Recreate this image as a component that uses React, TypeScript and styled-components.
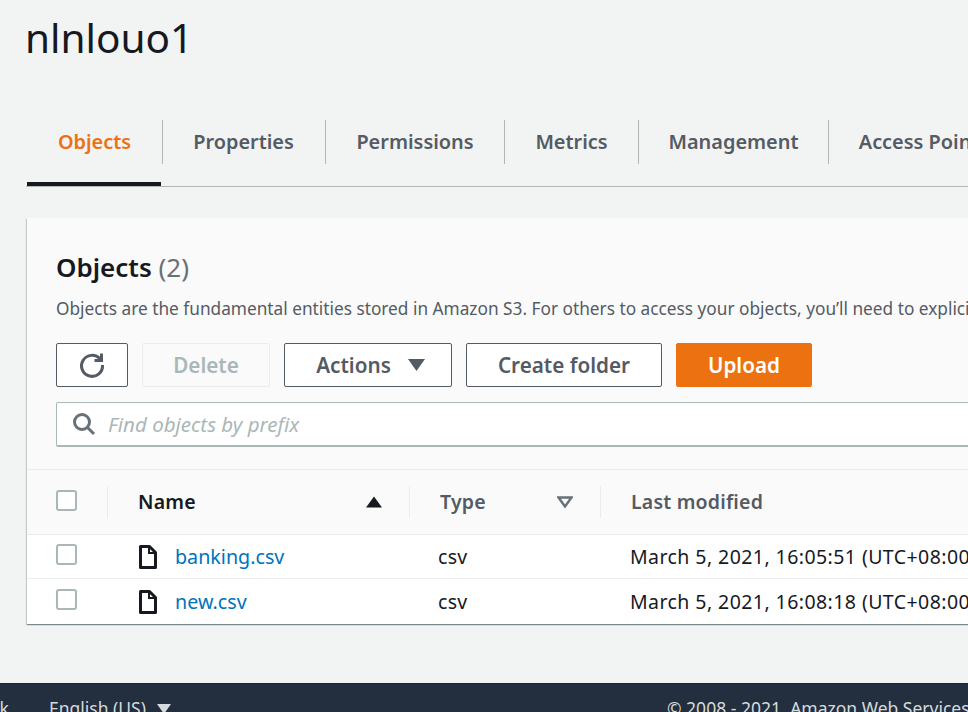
import React from 'react';
import styled, { createGlobalStyle } from 'styled-components';

const GlobalStyle = createGlobalStyle`
  html, body {
    margin: 0;
    height: 712px;
    overflow: hidden;
    background: #f2f3f3;
    font-family: 'Noto Sans', 'Open Sans', sans-serif;
  }
  * { box-sizing: border-box; }
`

const Page = styled.div`
  width: 968px;
  height: 712px;
  overflow: hidden;
  display: flex;
  flex-direction: column;
`
const Main = styled.main`
  width: 1500px;
  height: 683px;
  padding-left: 26px;
`
const Title = styled.h1`
  margin: 0 0 0 -1px;
  height: 120px;
  padding-top: 11px;
  font-size: 40.5px;
  line-height: 54px;
  font-weight: 400;
  color: #16191f;
`
const TabBar = styled.div`
  display: flex;
  height: 67px;
  padding-left: 1px;
  border-bottom: 1px solid #b0b5b7;
`
const Tab = styled.div<{ $active?: boolean; $width: number }>`
  width: ${p => p.$width}px;
  height: 66px;
  margin-right: ${p => (p.$active ? '1px' : '0')};
  font-size: 19.9px;
  line-height: 44px;
  font-weight: 600;
  text-align: center;
  white-space: nowrap;
  color: ${p => (p.$active ? '#ec7211' : '#545b64')};
  border-bottom: 4px solid ${p => (p.$active ? '#16191f' : 'transparent')};
  span {
    display: block;
    height: 44px;
    margin-right: ${p => (p.$active ? '-2px' : '0')};
    border-right: 1px solid #b0b5b7;
  }
  &:last-child span { border-right: none; }
`
const Card = styled.section`
  margin: 31px 0 0 1px;
  height: 406px;
  background: #fff;
  box-shadow: 0 1px 1px 0 rgba(0, 28, 36, 0.3), 1px 1px 1px 0 rgba(0, 28, 36, 0.15), -1px 1px 1px 0 rgba(0, 28, 36, 0.15);
`
const CardHead = styled.div`
  background: #fafafa;
  height: 252px;
  padding: 30px 0 0 29px;
  border-bottom: 1px solid #eaeded;
`
const Heading = styled.h2`
  margin: 0;
  font-size: 26px;
  line-height: 38px;
  font-weight: 600;
  color: #16191f;
  em {
    font-style: normal;
    font-weight: 400;
    color: #687078;
  }
`
const Desc = styled.p`
  margin: 11px 0 0;
  font-size: 17.25px;
  line-height: 24px;
  color: #545b64;
  white-space: nowrap;
`
const Toolbar = styled.div`
  display: flex;
  gap: 14px;
  margin-top: 22px;
`
const Button = styled.div<{ $width: number; $kind?: 'primary' | 'disabled' }>`
  width: ${p => p.$width}px;
  height: 44px;
  display: flex;
  align-items: center;
  justify-content: center;
  border-radius: 2px;
  font-size: 20.7px;
  font-weight: 600;
  color: ${p => (p.$kind === 'primary' ? '#fff' : p.$kind === 'disabled' ? '#aab7b8' : '#545b64')};
  background: ${p => (p.$kind === 'primary' ? '#ec7211' : p.$kind === 'disabled' ? '#fafafa' : '#fff')};
  border: 1px solid ${p => (p.$kind === 'primary' ? '#ec7211' : p.$kind === 'disabled' ? '#eaeded' : '#545b64')};
`
const ActionsCaret = styled.svg`
  margin: 0 -5px 0 17px;
`
const SearchBox = styled.div`
  margin-top: 15px;
  height: 45px;
  display: flex;
  align-items: center;
  gap: 12px;
  padding-left: 15px;
  background: #fff;
  border: 1px solid #aab7b8;
  border-bottom-width: 2px;
  border-radius: 2px;
  font-size: 20.5px;
  font-style: italic;
  color: #aab7b8;
`
const Row = styled.div<{ $head?: boolean; $height: number }>`
  display: grid;
  grid-template-columns: 80px 302px 191px 1fr;
  align-items: center;
  height: ${p => p.$height}px;
  background: ${p => (p.$head ? '#fafafa' : '#fff')};
  border-bottom: 1px solid #eaeded;
  &:last-child { border-bottom: none; }
`
const CheckCell = styled.div<{ $lift: number }>`
  display: flex;
  padding-left: 29px;
  margin-top: ${p => p.$lift}px;
`
const Check = styled.div`
  width: 21px;
  height: 21px;
  background: #fff;
  border: 2px solid #aab7b8;
  border-radius: 3px;
`
const HeadCell = styled.div<{ $dark?: boolean }>`
  height: 32px;
  display: flex;
  align-items: center;
  justify-content: space-between;
  padding: 0 27px 2px 30px;
  border-left: 1px solid #eaeded;
  font-size: 19.5px;
  font-weight: 600;
  letter-spacing: 0.2px;
  color: ${p => (p.$dark ? '#16191f' : '#545b64')};
`
const SortMark = styled.svg`
  margin-top: 2px;
`
const NameCell = styled.div`
  display: flex;
  align-items: center;
  gap: 18px;
  padding-left: 32px;
`
const FileLink = styled.a`
  font-size: 19.7px;
  color: #0073bb;
  text-decoration: none;
`
const Cell = styled.div<{ $indent: number; $spacing: number }>`
  font-size: 19.5px;
  color: #16191f;
  padding-left: ${p => p.$indent}px;
  white-space: nowrap;
  letter-spacing: ${p => p.$spacing}px;
`
const Footer = styled.footer`
  flex: none;
  width: 968px;
  height: 29px;
  display: flex;
  overflow: hidden;
  background: #232f3e;
  border-top: 1px solid #1a2430;
  font-size: 17.5px;
  line-height: 48px;
  color: #d5dbdb;
  white-space: nowrap;
`
const FooterLeft = styled.div`
  flex: none;
  width: 667px;
  display: flex;
  align-items: flex-start;
`
const Feedback = styled.span`
  margin-left: -69px;
  margin-right: 40px;
`
const LangCaret = styled.svg`
  margin: 20px 0 0 11px;
`

const RefreshIcon = () => (
  <svg width="28" height="28" viewBox="0 0 28 28" fill="none" stroke="#545b64" strokeWidth="3">
    <path d="M22 8 A10.5 10.5 0 1 0 24.5 14" />
    <path d="M23.5 2.5 V9.5 H16.5" strokeLinejoin="miter" />
  </svg>
)

const SearchIcon = () => (
  <svg width="24" height="24" viewBox="0 0 24 24" fill="none" stroke="#687078" strokeWidth="3">
    <circle cx="10" cy="10" r="7.5" />
    <path d="M15.5 15.5 L22 22" />
  </svg>
)

const FileIcon = () => (
  <svg width="18" height="24" viewBox="0 0 18 24" fill="none" stroke="#16191f" strokeWidth="3">
    <path d="M1.5 1.5 H10.5 L16.5 7.5 V22.5 H1.5 Z" strokeLinejoin="round" />
    <path d="M10 2 V8 H16" strokeWidth="2" />
  </svg>
)

const SortTriangle = ({ down, outline }: { down?: boolean; outline?: boolean }) => (
  <SortMark width="16" height="12" viewBox="0 0 16 12">
    <path
      d={down ? 'M1.5 1.5 H14.5 L8 10.5 Z' : 'M8 0.5 L16 11.5 H0 Z'}
      fill={outline ? 'none' : '#16191f'}
      stroke={outline ? '#687078' : 'none'}
      strokeWidth="2.4"
    />
  </SortMark>
)

const tabs = [
  { label: 'Objects', width: 134 },
  { label: 'Properties', width: 164 },
  { label: 'Permissions', width: 179 },
  { label: 'Metrics', width: 134 },
  { label: 'Management', width: 190 },
  { label: 'Access Points', width: 190 },
]

const files = [
  { name: 'banking.csv', modified: 'March 5, 2021, 16:05:51 (UTC+08:00)', height: 44 },
  { name: 'new.csv', modified: 'March 5, 2021, 16:08:18 (UTC+08:00)', height: 45 },
]

const App: React.FC = () => {
  return (
    <Page>
      <GlobalStyle />
      <Main>
        <Title>nlnlouo1</Title>
        <TabBar>
          {tabs.map((t, i) => (
            <Tab key={t.label} $active={i === 0} $width={t.width}>
              <span>{t.label}</span>
            </Tab>
          ))}
        </TabBar>
        <Card>
          <CardHead>
            <Heading>
              Objects <em>(2)</em>
            </Heading>
            <Desc>
              Objects are the fundamental entities stored in Amazon S3. For others to access your objects, you’ll need to explicitly grant them permissions.
            </Desc>
            <Toolbar>
              <Button $width={72}>
                <RefreshIcon />
              </Button>
              <Button $width={128} $kind="disabled">Delete</Button>
              <Button $width={168}>
                Actions
                <ActionsCaret width="17" height="12" viewBox="0 0 17 12">
                  <path d="M0 0 H17 L8.5 12 Z" fill="#545b64" />
                </ActionsCaret>
              </Button>
              <Button $width={196}>Create folder</Button>
              <Button $width={136} $kind="primary">Upload</Button>
            </Toolbar>
            <SearchBox>
              <SearchIcon />
              Find objects by prefix
            </SearchBox>
          </CardHead>
          <Row $head $height={65}>
            <CheckCell $lift={-3}>
              <Check />
            </CheckCell>
            <HeadCell $dark>
              Name
              <SortTriangle />
            </HeadCell>
            <HeadCell>
              Type
              <SortTriangle down outline />
            </HeadCell>
            <HeadCell>Last modified</HeadCell>
          </Row>
          {files.map(f => (
            <Row key={f.name} $height={f.height}>
              <CheckCell $lift={-4}>
                <Check />
              </CheckCell>
              <NameCell>
                <FileIcon />
                <FileLink>{f.name}</FileLink>
              </NameCell>
              <Cell $indent={29} $spacing={0.3}>csv</Cell>
              <Cell $indent={30} $spacing={0.43}>{f.modified}</Cell>
            </Row>
          ))}
        </Card>
      </Main>
      <Footer>
        <FooterLeft>
          <Feedback>Feedback</Feedback>
          <span>English (US)</span>
          <LangCaret width="14" height="10" viewBox="0 0 14 10">
            <path d="M0 0 H14 L7 10 Z" fill="#d5dbdb" />
          </LangCaret>
        </FooterLeft>
        <span>© 2008 - 2021, Amazon Web Services, Inc. or its affiliates. All rights reserved.</span>
      </Footer>
    </Page>
  )
}

export default App
